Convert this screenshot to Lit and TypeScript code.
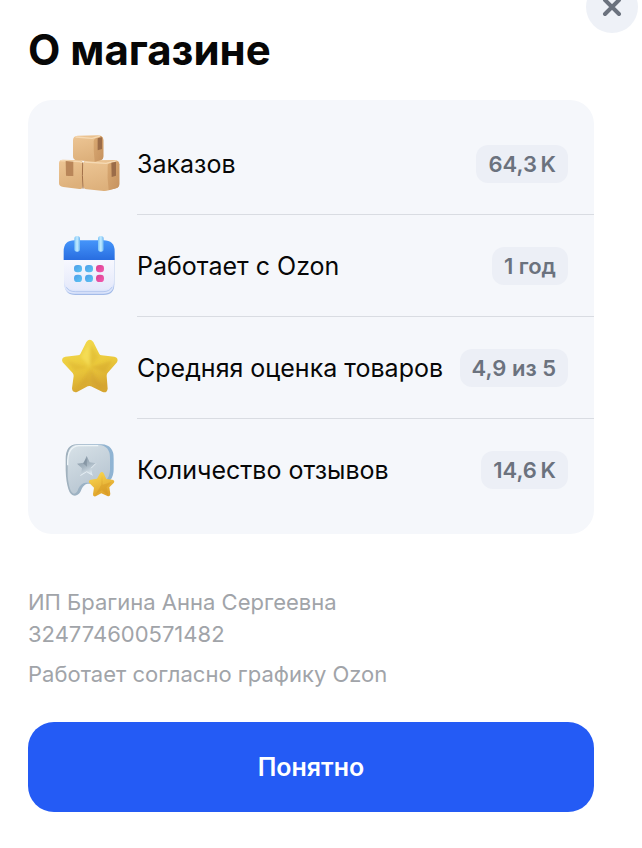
import { LitElement, html, css, svg } from "lit";
import { customElement } from "lit/decorators.js";

const boxes = html`<svg class="icon" viewBox="21 21 192 192" aria-hidden="true">
  <defs>
    <linearGradient id="front" x1="0" y1="0" x2="0.3" y2="1"><stop offset="0" stop-color="#edc695"/><stop offset="1" stop-color="#ddb07b"/></linearGradient>
    <linearGradient id="side" x1="0" y1="0" x2="1" y2="1"><stop offset="0" stop-color="#d9a972"/><stop offset="1" stop-color="#c6925f"/></linearGradient>
    <filter id="edgeSoft"><feGaussianBlur stdDeviation="1.2"/></filter>
  </defs>
  <path d="M27 115q0-12 13-11l49 2q9 1 9 9v67q0 11-10 10l-48-6q-13-1-13-11z" fill="url(#front)"/>
  <path d="M33 107l56 3 7 3" fill="none" stroke="#f6dab4" stroke-width="4" stroke-linecap="round" filter="url(#edgeSoft)"/>
  <path d="M47 108l23 2v43q-11 1-22-1z" fill="#b98659"/>
  <path d="M99 118q1-11 12-12l84-1q13 1 13 13v58q0 11-10 14l-22 6q-8 3-15 2l-50-5q-12-1-12-11z" fill="url(#front)"/>
  <path d="M173 120q1-5 7-7l19-6q8 2 9 11v58q0 11-10 14l-22 6q-5-38-3-76z" fill="url(#side)"/>
  <path d="M106 111l62 4 30-7" fill="none" stroke="#f6dab4" stroke-width="4" stroke-linecap="round" filter="url(#edgeSoft)"/>
  <path d="M184 113l14-3v42l-13 4z" fill="#9b6c48"/>
  <path d="M98 113q-2 39 1 78" fill="none" stroke="#a37148" stroke-width="3"/>
  <path d="M69 46q0-13 14-14l60-1q17 0 17 15v48q0 10-9 12l-16 4-54-4q-12-1-12-12z" fill="url(#front)"/>
  <path d="M131 48q1-6 7-9l14-6q8 3 8 13v48q0 10-9 12l-17 4q-4-31-3-62z" fill="url(#side)"/>
  <path d="M78 36l48 4 22-6" fill="none" stroke="#f6dab4" stroke-width="4" stroke-linecap="round" filter="url(#edgeSoft)"/>
  <path d="M143 40l13-3v35l-13 4z" fill="#9b6c48"/>
</svg>`;

const dot = (x: number, y: number, fill: string) =>
  svg`<rect x=${x - 12} y=${y - 11} width="24" height="22" rx="10" fill=${fill} />`;

const calendar = html`<svg class="icon" viewBox="21 27 192 192" aria-hidden="true">
  <defs>
    <linearGradient id="top" x1="0" y1="0" x2="0" y2="1"><stop offset="0" stop-color="#4595fa"/><stop offset="1" stop-color="#286de0"/></linearGradient>
    <linearGradient id="sheet" x1="0" y1="0" x2="0" y2="1"><stop offset="0" stop-color="#f8f9ff"/><stop offset="1" stop-color="#e5e9fa"/></linearGradient>
    <linearGradient id="ring" x1="0" y1="0" x2="1" y2="0"><stop offset="0" stop-color="#79c3f7"/><stop offset="0.5" stop-color="#c4ecff"/><stop offset="1" stop-color="#6ab4f2"/></linearGradient>
    <linearGradient id="blue" x1="0" y1="0" x2="1" y2="1"><stop offset="0" stop-color="#4e9de9"/><stop offset="1" stop-color="#5bc5f3"/></linearGradient>
    <linearGradient id="pink" x1="0" y1="0" x2="1" y2="1"><stop offset="0" stop-color="#da3e91"/><stop offset="1" stop-color="#f35caf"/></linearGradient>
  </defs>
  <path d="M44 100h149v78q0 32-32 32H76q-32 0-32-32z" fill="#a3bbe8"/>
  <path d="M42 98h150v76q0 32-32 32H74q-32 0-32-32z" fill="#dce5fb"/>
  <path d="M49 186q7 14 27 14h83q20 0 27-14" fill="none" stroke="#a1b9e8" stroke-width="2"/>
  <path d="M42 98h150v66q0 30-31 30H73q-31 0-31-30z" fill="url(#sheet)"/>
  <path d="M41 105V79q0-33 33-33h86q34 0 34 33v26z" fill="url(#top)"/>
  <rect x="73" y="33" width="17" height="47" rx="8" fill="url(#ring)"/>
  <rect x="144" y="33" width="17" height="47" rx="8" fill="url(#ring)"/>
  ${dot(84, 131, "url(#blue)")}${dot(117, 131, "url(#blue)")}${dot(150, 131, "url(#pink)")}
  ${dot(84, 160, "url(#blue)")}${dot(117, 160, "url(#blue)")}${dot(150, 160, "url(#pink)")}
</svg>`;

const star = html`<svg class="icon" viewBox="21 18 192 192" aria-hidden="true">
  <defs>
    <linearGradient id="gold" x1="0" y1="0" x2="0.3" y2="1"><stop offset="0" stop-color="#f3dc50"/><stop offset="0.6" stop-color="#ebc93b"/><stop offset="1" stop-color="#d6a631"/></linearGradient>
    <filter id="facet"><feGaussianBlur stdDeviation="4"/></filter>
  </defs>
  <path d="M109 36q10-13 21 0l18 36q2 4 7 4l38 4q14 4 8 17l-29 33q-2 3-2 8l3 38q-2 14-15 10l-35-17q-5-2-10 0l-32 17q-14 3-15-11l5-37q0-5-3-9L38 97q-6-13 8-17l38-4q5 0 7-4z" fill="url(#gold)"/>
  <g filter="url(#facet)">
    <path d="M118 42l2 68-28-30z" fill="#fbe966" opacity=".5"/>
    <path d="M121 42l-1 68 27-30z" fill="#d5ac2c" opacity=".35"/>
    <path d="M188 91l-66 20 42 17z" fill="#d0a02b" opacity=".4"/>
    <path d="M121 114l36 60-36-16z" fill="#c99429" opacity=".35"/>
    <path d="M119 118l-38 56 36-16z" fill="#c99429" opacity=".25"/>
    <path d="M116 112L50 92l24 32z" fill="#d5a82d" opacity=".35"/>
  </g>
</svg>`;

const review = html`<svg class="icon" viewBox="21 24 192 192" aria-hidden="true">
  <defs>
    <linearGradient id="bubble" x1="0" y1="0" x2="0.5" y2="1"><stop offset="0" stop-color="#d8e2e8"/><stop offset="1" stop-color="#b7c5d1"/></linearGradient>
    <linearGradient id="edge" x1="0" y1="0" x2="1" y2="0"><stop offset="0" stop-color="#a1b1bd"/><stop offset="1" stop-color="#8fb4d4"/></linearGradient>
    <linearGradient id="hollow" x1="0" y1="0" x2="0.5" y2="1"><stop offset="0" stop-color="#7f909e"/><stop offset="0.6" stop-color="#a9b8c4"/><stop offset="1" stop-color="#dce7ee"/></linearGradient>
    <linearGradient id="amber" x1="0" y1="0" x2="0.4" y2="1"><stop offset="0" stop-color="#fcdc52"/><stop offset="1" stop-color="#dfa32c"/></linearGradient>
    <filter id="soft"><feGaussianBlur stdDeviation="2"/></filter>
  </defs>
  <path d="M80 43h75q37 2 36 43v32q0 40-36 43h-42q-12 2-18 16-6 18-20 20-14 0-20-20-7-22-8-57V87q0-43 33-44z" fill="url(#edge)"/>
  <path d="M80 45h67q33 2 33 39v34q-1 38-33 40h-40q-14 1-22 18-4 14-13 15-14-1-19-52V85q0-38 27-40z" fill="url(#bubble)"/>
  <path d="M53 104q-2-54 33-57h57" fill="none" stroke="#eef5f8" stroke-width="4" stroke-linecap="round" filter="url(#soft)"/>
  <path d="M110 78l9 19 20 3-15 14 3 22-17-9-18 10 4-22-15-14 20-3z" fill="url(#hollow)"/>
  <path d="M92 136l18-11 17 10M137 101l-13 13" fill="none" stroke="#e4edf3" stroke-width="3" stroke-linecap="round"/>
  <path d="M110 84l1 26-12-10z" fill="#6f808f" opacity=".5"/>
  <path d="M150 130q6-8 11 0l8 17 18 2q9 3 4 10l-13 13 3 20q-1 9-9 6l-18-8-17 9q-9 2-8-7l3-19-14-14q-4-8 4-10l19-3z" fill="url(#amber)"/>
  <path d="M156 133l2 31 28-9-16 17 5 24-20-15-19 13 18-30z" fill="#d0901f" opacity=".35" filter="url(#soft)"/>
</svg>`;

const stats = [
  { icon: boxes, name: "Заказов", value: "64,3\u2009K" },
  { icon: calendar, name: "Работает с Ozon", value: "1 год" },
  { icon: star, name: "Средняя оценка товаров", value: "4,9 из 5" },
  { icon: review, name: "Количество отзывов", value: "14,6\u2009K" },
];

@customElement("app-root")
export class AppRoot extends LitElement {
  static styles = css`
    :host {
      display: block;
      position: relative;
      overflow: hidden;
      min-height: 100vh;
      box-sizing: border-box;
      padding: 24px 48px 36px 28px;
      background: #fff;
      color: #070707;
      font-family: Inter, "Noto Sans", sans-serif;
    }
    .close {
      position: absolute;
      top: -19px;
      right: 4px;
      width: 52px;
      height: 52px;
      padding: 0;
      border: 0;
      border-radius: 50%;
      background: #eef1f7;
      display: grid;
      place-items: center;
      cursor: pointer;
    }
    .cross { width: 20px; height: 20px; }
    h1 {
      margin: 0 0 24px;
      font-size: 42px;
      line-height: 52px;
      font-weight: 700;
    }
    .stats {
      margin: 0;
      padding: 13px 0;
      list-style: none;
      border-radius: 24px;
      background: #f5f7fb;
    }
    .row {
      display: flex;
      align-items: stretch;
      gap: 16px;
      padding-left: 29px;
    }
    .icon { width: 64px; flex: none; }
    .line {
      flex: 1;
      box-sizing: border-box;
      display: flex;
      align-items: center;
      justify-content: space-between;
      gap: 12px;
      min-height: 102px;
      padding-right: 26px;
      border-bottom: 1px solid #d9dce2;
    }
    .row:last-child .line { border-bottom: 0; }
    .name { font-size: 25px; line-height: 32px; }
    .value {
      flex: none;
      padding: 4px 12px;
      border-radius: 12px;
      background: #eceff6;
      color: #6b727e;
      font-size: 22px;
      line-height: 30px;
      font-weight: 600;
    }
    .seller {
      margin: 52px 0 32px;
      color: #a1a4a9;
      font-size: 22px;
      line-height: 32px;
    }
    .seller p { margin: 0 0 8px; }
    .ok {
      display: block;
      width: 100%;
      height: 90px;
      border: 0;
      border-radius: 26px;
      background: #245bf5;
      color: #fff;
      font: 600 25px/32px Inter, "Noto Sans", sans-serif;
      cursor: pointer;
    }
  `;

  render() {
    return html`
      <button class="close" type="button" aria-label="Закрыть">
        <svg class="cross" viewBox="0 0 20 20" aria-hidden="true">
          <path d="M3 3L17 17M17 3L3 17" stroke="#6b727e" stroke-width="4" stroke-linecap="round" />
        </svg>
      </button>
      <h1>О магазине</h1>
      <ul class="stats">
        ${stats.map(
          (s) => html`<li class="row">
            ${s.icon}
            <div class="line">
              <span class="name">${s.name}</span>
              <span class="value">${s.value}</span>
            </div>
          </li>`
        )}
      </ul>
      <div class="seller">
        <p>ИП Брагина Анна Сергеевна<br />324774600571482</p>
        <p>Работает согласно графику Ozon</p>
      </div>
      <button class="ok" type="button">Понятно</button>
    `;
  }
}
